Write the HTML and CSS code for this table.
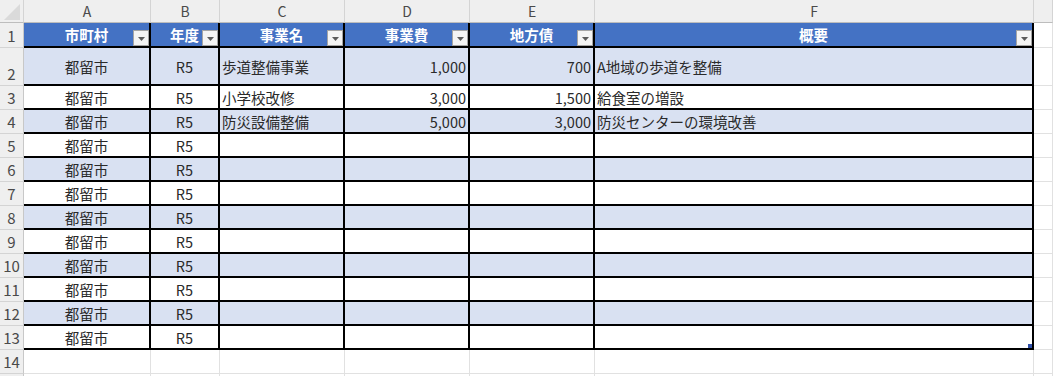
FILE: index.html
```html
<!DOCTYPE html>
<html lang="ja">
<head>
    <meta charset="UTF-8">
    <meta name="viewport" content="width=device-width, initial-scale=1.0">
    <title>事業一覧</title>
    <link rel="stylesheet" href="styles.css">
</head>
<body>

<div class="sheet" id="sheet">
    <!-- Column letters -->
    <div class="row row-letters">
        <div class="corner">
            <svg width="18" height="17" viewBox="0 0 18 17"><polygon points="17,1 17,17 1,17" fill="#dadada"/></svg>
        </div>
        <div class="col-name">A</div>
        <div class="col-name">B</div>
        <div class="col-name">C</div>
        <div class="col-name">D</div>
        <div class="col-name">E</div>
        <div class="col-name">F</div>
        <div class="col-name"></div>
    </div>

    <!-- Table header (row 1) -->
    <div class="row row-head" id="row-head">
        <div class="row-num">1</div>
    </div>
</div>

<script>
const headers = ['市町村', '年度', '事業名', '事業費', '地方債', '概要'];

const projets = [
    { city: '都留市', year: 'R5', name: '歩道整備事業', cost: '1,000', debt: '700', memo: 'A地域の歩道を整備' },
    { city: '都留市', year: 'R5', name: '小学校改修', cost: '3,000', debt: '1,500', memo: '給食室の増設' },
    { city: '都留市', year: 'R5', name: '防災設備整備', cost: '5,000', debt: '3,000', memo: '防災センターの環境改善' }
];

const filterIcon = '<span class="filter"><svg width="7" height="4" viewBox="0 0 7 4"><polygon points="0,0 7,0 3.5,4" fill="#5b5b5b"/></svg></span>';

// En-tête du tableau
const head = document.getElementById('row-head');
headers.forEach((label) => {
    head.insertAdjacentHTML('beforeend', `<div class="cell th"><span class="th-label">${label}</span>${filterIcon}</div>`);
});
head.insertAdjacentHTML('beforeend', '<div class="cell empty"></div>');

// Lignes 2 à 13
const sheet = document.getElementById('sheet');
for (let i = 0; i < 12; i++) {
    const p = projets[i] || { city: '都留市', year: 'R5', name: '', cost: '', debt: '', memo: '' };
    const rowNumber = i + 2;
    const row = document.createElement('div');
    row.classList.add('row');
    if (rowNumber % 2 === 0) row.classList.add('band');
    if (rowNumber === 2) row.classList.add('tall');
    row.innerHTML = `
        <div class="row-num">${rowNumber}</div>
        <div class="cell center">${p.city}</div>
        <div class="cell center">${p.year}</div>
        <div class="cell">${p.name}</div>
        <div class="cell num">${p.cost}</div>
        <div class="cell num">${p.debt}</div>
        <div class="cell${rowNumber === 13 ? ' last' : ''}">${p.memo}</div>
        <div class="cell empty"></div>
    `;
    sheet.appendChild(row);
}

// Lignes vides en dessous
[14, ''].forEach((n) => {
    const row = document.createElement('div');
    row.classList.add('row');
    let html = `<div class="row-num">${n}</div>`;
    for (let c = 0; c < 7; c++) html += '<div class="cell empty"></div>';
    row.innerHTML = html;
    sheet.appendChild(row);
});
</script>

</body>
</html>
```

FILE: styles.css
```css
:root {
    --head-blue: #4472c4;
    --band-blue: #d9e1f2;
    --frame-bg: #efefef;
    --grid-line: #e1e1e1;
    --frame-line: #d4d4d4;
}

body {
    margin: 0;
    font-family: "Noto Sans CJK JP", "Noto Sans", sans-serif;
    background-color: white;
    overflow: hidden;
}

.sheet {
    width: 1053px;
    height: 376px;
    overflow: hidden;
}

.row {
    display: grid;
    grid-template-columns: 24px 127px 69px 125px 125px 125px 439px 1fr;
    height: 24px;
}

.row.tall {
    height: 38px;
}

.row-letters {
    height: 23px;
}

.row-head {
    height: 25px;
}

/* Cadre gris (lettres et numéros) */
.corner,
.col-name,
.row-num {
    box-sizing: border-box;
    background-color: var(--frame-bg);
    color: #4a4a4a;
    font-size: 14px;
    display: flex;
}

.corner {
    border-right: 1px solid var(--frame-line);
    border-bottom: 1px solid #bdbdbd;
    justify-content: flex-end;
    align-items: flex-end;
    padding: 0 2px 2px 0;
}

.col-name {
    border-right: 1px solid var(--frame-line);
    border-bottom: 1px solid #bdbdbd;
    justify-content: center;
    align-items: center;
}

.row-num {
    border-right: 1px solid #c8c8c8;
    border-bottom: 1px solid var(--frame-line);
    justify-content: center;
    align-items: flex-end;
    padding-bottom: 1px;
    font-size: 15px;
}

/* Cellules */
.cell {
    box-sizing: border-box;
    border-right: 2px solid #000;
    border-bottom: 2px solid #000;
    font-size: 14.5px;
    color: #2a2a2a;
    display: flex;
    align-items: center;
    padding: 0 2px;
    white-space: nowrap;
    overflow: hidden;
}

.cell.center {
    justify-content: center;
}

.cell.num {
    justify-content: flex-end;
}

.band .cell {
    background-color: var(--band-blue);
}

.band .cell.empty {
    background-color: white;
}

.cell.empty {
    border-right: 1px solid var(--grid-line);
    border-bottom: 1px solid var(--grid-line);
}

.cell.last {
    position: relative;
}

.cell.last::after {
    content: "";
    position: absolute;
    right: 0;
    bottom: 0;
    width: 4px;
    height: 4px;
    background-color: #2f4fa8;
}

/* En-tête bleu avec filtres */
.cell.th {
    background-color: var(--head-blue);
    color: white;
    font-weight: bold;
    display: grid;
    padding: 0;
}

.cell.th > * {
    grid-area: 1 / 1;
}

.th-label {
    justify-self: center;
    align-self: center;
}

.filter {
    justify-self: end;
    align-self: end;
    box-sizing: border-box;
    width: 16px;
    height: 16px;
    border: 1px solid #a5a5a5;
    background-color: #f4f4f4;
    display: flex;
    justify-content: center;
    align-items: center;
    padding-top: 2px;
}
```
